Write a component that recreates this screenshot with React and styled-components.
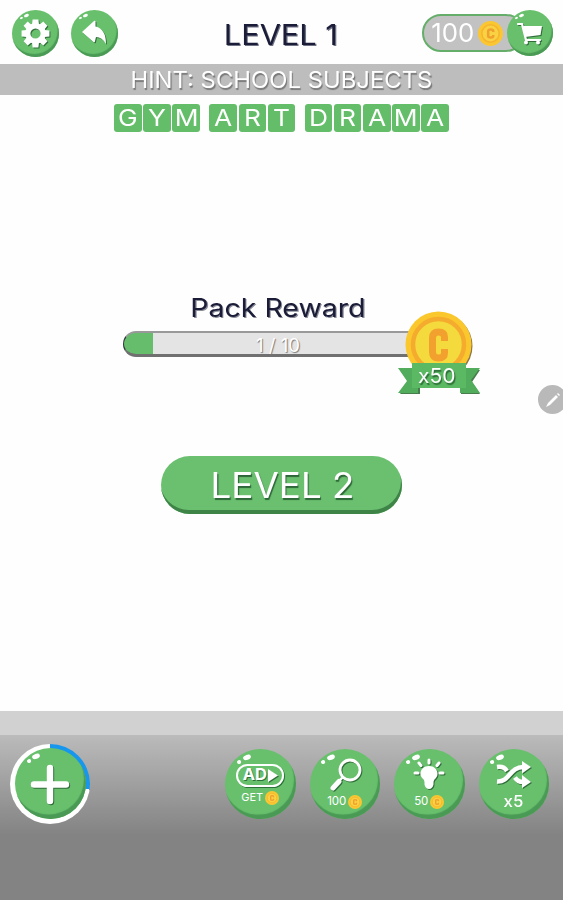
import React from 'react';
import styled, { createGlobalStyle } from 'styled-components';

const GlobalStyle = createGlobalStyle`
  body {
    margin: 0;
    background: #fefefe;
    font-family: Inter, 'Liberation Sans', sans-serif;
  }
  * {
    box-sizing: border-box;
  }
`;

const Screen = styled.div`
  display: flex;
  flex-direction: column;
  width: 563px;
  height: 900px;
  overflow: hidden;
  background: #fefefe;
`;

const Header = styled.div`
  display: flex;
  align-items: center;
  justify-content: space-between;
  height: 64px;
  padding: 2px 10px 0 12px;
`;

const NavButtons = styled.div`
  display: flex;
  gap: 12px;
`;

const LevelTitle = styled.div`
  padding: 4px 0 0 22px;
`;

// widens the font without changing its height
const Label = styled.span`
  display: block;
  flex-shrink: 0;
  white-space: nowrap;
  font-size: ${({ size }) => size}px;
  font-weight: ${({ weight }) => weight || 400};
  line-height: 1.2;
  color: ${({ dark }) => (dark ? '#1b1d38' : '#fff')};
  text-shadow: ${({ shadow }) => shadow || 'none'};
  transform: scaleX(${({ stretch }) => stretch || 1});
`;

const RoundButton = styled.button`
  position: relative;
  display: flex;
  flex-direction: column;
  align-items: center;
  justify-content: center;
  flex-shrink: 0;
  width: ${({ size }) => size}px;
  height: ${({ size }) => size}px;
  padding: 0;
  border: 0;
  border-radius: 50%;
  background: #68c06d;
  box-shadow: inset ${({ size }) => `${-size / 35}px ${-size / 16}px`} 1px #4a9a55;
  font-family: inherit;
  &:before,
  &:after {
    content: '';
    position: absolute;
    border-radius: 50%;
    background: #fff;
    transform: rotate(-20deg);
  }
  &:before {
    left: 25%;
    top: 9%;
    width: 11%;
    height: 7%;
  }
  &:after {
    left: 17%;
    top: 16%;
    width: 6%;
    height: 5%;
  }
`;

const Icon = styled.svg`
  display: block;
  overflow: visible;
  filter: drop-shadow(1px 1px 0 rgba(30, 80, 40, 0.75));
`;

const Wallet = styled.div`
  display: flex;
  align-items: center;
`;

const Balance = styled.div`
  display: flex;
  align-items: center;
  gap: 4px;
  width: 103px;
  height: 38px;
  margin-right: -18px;
  padding-left: 8px;
  border: 2px solid #65ae6a;
  border-radius: 19px;
  background: #c2c2c2;
`;

const HintBar = styled.div`
  display: flex;
  align-items: center;
  justify-content: center;
  height: 31px;
  background: #bdbdbd;
`;

const Words = styled.div`
  display: flex;
  justify-content: center;
  gap: 9.4px;
  padding-top: 9px;
`;

const Word = styled.div`
  display: flex;
  gap: 1.6px;
`;

const Tile = styled.div`
  display: flex;
  align-items: center;
  justify-content: center;
  width: 27.6px;
  height: 28px;
  padding-top: 1px;
  border-radius: 3px;
  background: #64bd69;
`;

const Reward = styled.div`
  display: flex;
  flex-direction: column;
  align-items: center;
  height: 324px;
  padding-top: 161px;
`;

const RewardTitle = styled.div`
  padding-right: 8px;
`;

const ProgressRow = styled.div`
  position: relative;
  width: 316px;
  margin: 8px 2px 0 0;
`;

const Track = styled.div`
  display: flex;
  align-items: center;
  justify-content: center;
  height: 26px;
  padding: 4px 4px 0 0;
  border: 2px solid #999;
  border-bottom: 3px solid #707070;
  border-left: 1px solid #30363c;
  border-radius: 13px;
  background: linear-gradient(90deg, #66bd6c 29px, #e4e4e4 29px);
`;

const Medal = styled.svg`
  position: absolute;
  right: -41px;
  top: -20px;
  overflow: visible;
`;

const MedalCount = styled.div`
  position: absolute;
  right: -38px;
  top: 33px;
  width: 80px;
  display: flex;
  justify-content: center;
`;

const EditRow = styled.div`
  display: flex;
  justify-content: flex-end;
  height: 29px;
  margin-top: -71px;
  margin-right: -4px;
`;

const EditBadge = styled.div`
  display: flex;
  align-items: center;
  justify-content: center;
  width: 29px;
  height: 29px;
  border-radius: 50%;
  background: #b9b9b9;
`;

const NextButton = styled.button`
  display: flex;
  align-items: center;
  justify-content: center;
  align-self: center;
  width: 241px;
  height: 58px;
  margin-top: 42px;
  padding: 0 0 0 1px;
  border: 0;
  border-radius: 29px;
  background: #6bc070;
  box-shadow: inset -1px -4px 0 #3e8447;
  font-family: inherit;
`;

const Footer = styled.div`
  height: 189px;
  margin-top: auto;
  border-top: 24px solid #d1d1d1;
  background: linear-gradient(#bbb 0, #838383 100px, #838383 100%);
`;

const Tools = styled.div`
  display: flex;
  align-items: center;
  justify-content: space-between;
  padding: 9px 14px 0 10px;
`;

const ToolGroup = styled.div`
  display: flex;
  gap: 14px;
`;

const Ring = styled.div`
  display: flex;
  justify-content: center;
  width: 80px;
  height: 80px;
  padding-top: 4px;
  border-radius: 50%;
  background: conic-gradient(#1696ed 0 98deg, #fff 98deg);
`;

const Cost = styled.div`
  display: flex;
  align-items: center;
  justify-content: center;
  gap: 2px;
  height: 14px;
  margin-top: ${({ top }) => top || 0}px;
`;

const Coin = ({ size }) => (
  <svg width={size} height={size} viewBox="0 0 26 26">
    <circle cx="13" cy="13" r="13" fill="#fac731" />
    <circle cx="13" cy="13" r="9" fill="#f9d244" stroke="#f6b42f" strokeWidth="1.6" />
    <path
      d="M15.8 11.4V10.2Q15.8 8.8 13.2 8.8T10.6 10.4v5.2q0 1.6 2.6 1.6t2.6-1.6v-1"
      fill="none"
      stroke="#f0a02d"
      strokeWidth="2.6"
    />
  </svg>
);

const GearIcon = () => (
  <Icon width="29" height="29" viewBox="-15 -15 30 30">
    <g fill="#fff">
      {[0, 45, 90, 135, 180, 225, 270, 315].map((angle) => (
        <path
          key={angle}
          d="M-3.6-9l.6-5.4h6l.6 5.4z"
          transform={`rotate(${angle})`}
        />
      ))}
    </g>
    <circle r="8" fill="none" stroke="#fff" strokeWidth="5.4" />
  </Icon>
);

const BackIcon = () => (
  <Icon width="26" height="26" viewBox="0 0 26 26">
    <path
      d="M0 12 12 1q1.500-1 1.500 1v4.500Q24 9 24 24q-4-7-10-7l-1 4q0 2-1.500 1z"
      fill="#fff"
    />
  </Icon>
);

const CartIcon = () => (
  <Icon width="26" height="23" viewBox="0 0 26 23">
    <path d="M1 2h4l4 16h14" fill="none" stroke="#fff" strokeWidth="2.2" strokeLinecap="round" />
    <path d="M6 4h19l-1.5 9L8 15z" fill="#fff" />
    <circle cx="9" cy="20.5" r="2" fill="#fff" />
    <circle cx="21" cy="20.5" r="2" fill="#fff" />
  </Icon>
);

const PlusIcon = () => (
  <Icon width="40" height="40" viewBox="0 0 40 40">
    <path d="M20 4v33M4 20.5h32" stroke="#fff" strokeWidth="6.4" strokeLinecap="round" />
  </Icon>
);

const SearchIcon = () => (
  <Icon width="36" height="34" viewBox="0 0 36 34">
    <circle cx="23" cy="11" r="10" fill="none" stroke="#fff" strokeWidth="2.8" />
    <path d="M15.5 18.5l-4 4" stroke="#fff" strokeWidth="2.4" />
    <path d="M12 22.5l-6 6.5" stroke="#fff" strokeWidth="5" strokeLinecap="round" />
  </Icon>
);

const BulbIcon = () => (
  <Icon width="30" height="34" viewBox="0 0 30 34">
    <path
      d="M15 7c-5 0-8.5 3.4-8.5 7.6 0 5 4 5 4 9v2q1 4.4 4.5 4.4t4.5-4.4v-2c0-4 4-4 4-9C23.5 10.4 20 7 15 7z"
      fill="#fff"
    />
    <path
      d="M15 4V1M7 6.5 5 4M23 6.5l2-2.5M4 14H1M26 14h3"
      stroke="#fff"
      strokeWidth="3"
      strokeLinecap="round"
    />
  </Icon>
);

const ShuffleIcon = () => (
  <Icon width="36" height="28" viewBox="0 0 36 28">
    <path
      d="M1 7q7-1 10 4M1 21.5c13 1 12-15 27-14.500M19 17.500q3 5 9 4.500"
      fill="none"
      stroke="#fff"
      strokeWidth="4.5"
    />
    <path d="M26 1l9 6-9 6.5zM26 15l9 7-9 6z" fill="#fff" />
  </Icon>
);

const AdFrame = styled.div`
  display: flex;
  align-items: center;
  justify-content: center;
  gap: 1px;
  width: 48px;
  height: 23px;
  border: 2px solid #fff;
  border-radius: 12px;
  box-shadow: 1px 1px 0 #2d713a;
`;

const AdIcon = () => (
  <AdFrame>
    <Label size={16.5} weight={700} shadow="1px 1px 0 #2d713a">AD</Label>
    <Icon width="10" height="13" viewBox="0 0 10 13">
      <path d="M0 0l10 6.5-10 6.5z" fill="#fff" />
    </Icon>
  </AdFrame>
);

const words = ['GYM', 'ART', 'DRAMA'];

const App = () => {
  return (
    <>
      <GlobalStyle />
      <Screen>
        <Header>
          <NavButtons>
            <RoundButton size={47}>
              <GearIcon />
            </RoundButton>
            <RoundButton size={47}>
              <BackIcon />
            </RoundButton>
          </NavButtons>
          <LevelTitle>
            <Label size={29} weight={400} dark stretch={1.06} shadow="1px 1px 0 #6f7285">
              LEVEL 1
            </Label>
          </LevelTitle>
          <Wallet>
            <Balance>
              <Label size={25} stretch={1.03}>100</Label>
              <Coin size={25} />
            </Balance>
            <RoundButton size={46}>
              <CartIcon />
            </RoundButton>
          </Wallet>
        </Header>

        <HintBar>
          <Label size={22.5} stretch={1.06} shadow="1px 2px 1px #777">
            HINT: SCHOOL SUBJECTS
          </Label>
        </HintBar>

        <Words>
          {words.map((word) => (
            <Word key={word}>
              {word.split('').map((letter, i) => (
                <Tile key={i}>
                  <Label size={23.5} stretch={1.12}>{letter}</Label>
                </Tile>
              ))}
            </Word>
          ))}
        </Words>

        <Reward>
          <RewardTitle>
            <Label size={25} weight={400} dark stretch={1.14} shadow="1px 1px 0 #8b8d99">
              Pack Reward
            </Label>
          </RewardTitle>
          <ProgressRow>
            <Track>
              <Label size={18.5} shadow="1px 1px 1px #777">1 / 10</Label>
            </Track>
            <Medal width="82" height="84" viewBox="0 0 82 84">
              <circle cx="42" cy="35" r="32.5" fill="#8b7746" />
              <circle cx="40.5" cy="33.5" r="33" fill="#fac72c" />
              <circle cx="40.5" cy="33.5" r="25.5" fill="#f4da3c" stroke="#f5ab2d" strokeWidth="4.5" />
              <path
                d="M46.5 30v-4q0-5-6-5t-6 6v14q0 6 6 6t6-5v-4"
                fill="none"
                stroke="#f3a12e"
                strokeWidth="7"
              />
              <path d="M2 59l14-2h50l16 2-8 12 8 12H63v-6H22v6H2l9-12z" fill="#477c4c" />
              <path d="M0 57h20v25H0l9-12zM62 57h20l-9 12 9 13H62z" fill="#51ac5b" />
              <path d="M14 52h54v25H14z" fill="#5bb964" />
            </Medal>
            <MedalCount>
              <Label size={20} stretch={1.05} shadow="1px 2px 1px #2e6b37">x50</Label>
            </MedalCount>
          </ProgressRow>
        </Reward>

        <EditRow>
          <EditBadge>
            <svg width="16" height="16" viewBox="0 0 16 16">
              <path d="M1 15l2-4 8-8 2 2-8 8zM12 2l1-1 2 2-1 1z" fill="#fff" />
            </svg>
          </EditBadge>
        </EditRow>

        <NextButton>
          <Label size={35} stretch={1.05} shadow="1px 2px 1px #2c6537">LEVEL 2</Label>
        </NextButton>

        <Footer>
          <Tools>
            <Ring>
              <RoundButton size={71}>
                <PlusIcon />
              </RoundButton>
            </Ring>
            <ToolGroup>
              <RoundButton size={70.5}>
                <AdIcon />
                <Cost top={4}>
                  <Label size={11}>GET</Label>
                  <Coin size={14} />
                </Cost>
              </RoundButton>
              <RoundButton size={70.5}>
                <SearchIcon />
                <Cost top={2}>
                  <Label size={11.5}>100</Label>
                  <Coin size={14} />
                </Cost>
              </RoundButton>
              <RoundButton size={70.5}>
                <BulbIcon />
                <Cost top={2}>
                  <Label size={11.5}>50</Label>
                  <Coin size={14} />
                </Cost>
              </RoundButton>
              <RoundButton size={70.5}>
                <ShuffleIcon />
                <Cost top={7}>
                  <Label size={16} weight={500} stretch={1.05}>x5</Label>
                </Cost>
              </RoundButton>
            </ToolGroup>
          </Tools>
        </Footer>
      </Screen>
    </>
  );
};

export default App;
